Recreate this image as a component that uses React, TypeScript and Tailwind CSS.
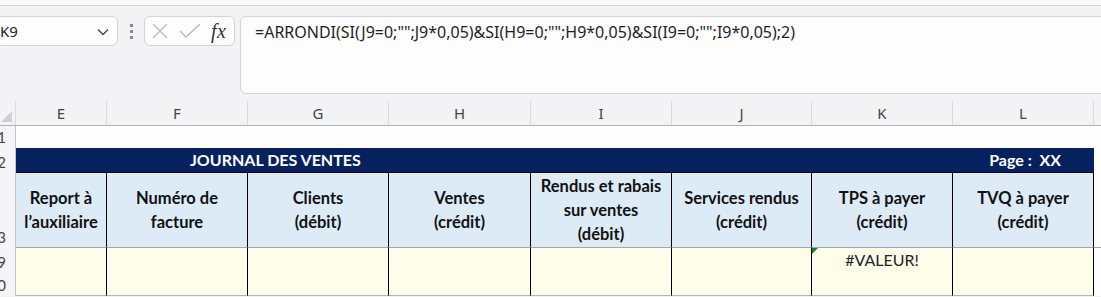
import React from 'react';

const cols = ['E', 'F', 'G', 'H', 'I', 'J', 'K', 'L'];
const grid = 'grid grid-cols-[16px_91px_141px_141px_142px_141px_140px_141px_141px_1fr]';

const headers: string[][] = [
  ['Report à', 'l’auxiliaire'],
  ['Numéro de', 'facture'],
  ['Clients', '(débit)'],
  ['Ventes', '(crédit)'],
  ['Rendus et rabais', 'sur ventes', '(débit)'],
  ['Services rendus', '(crédit)'],
  ['TPS à payer', '(crédit)'],
  ['TVQ à payer', '(crédit)'],
];

// row header is scrolled off to the left, only its right edge shows
function RowNum({ n, className = '' }: { n: string; className?: string }) {
  return (
    <div className={`overflow-hidden bg-[#f5f4f7] border-r border-[#c6c6c6] flex items-end justify-end pr-[9px] text-[15px] leading-[22px] text-[#444] ${className}`}>
      <span className="whitespace-nowrap">{n}</span>
    </div>
  );
}

export default function App() {
  return (
    <div className="w-[1101px] h-[297px] overflow-hidden bg-[#f3f2f5] font-['Noto_Sans',sans-serif]">
      {/* ribbon edge */}
      <div className="h-[6px] bg-[#fbfbfb] border-b border-[#d6d6d6]" />

      {/* formula bar */}
      <div className="flex items-start gap-[5px] pt-[10px] h-[95px]">
        <div className="-ml-[4px] w-[122px] h-[30px] flex items-center justify-between pl-[3px] pr-[8px] bg-[#fdfdfd] border border-[#d3d3d3] rounded-[6px]">
          <span className="text-[15px] text-[#222]">K9</span>
          <svg width="12" height="8" viewBox="0 0 12 8" className="mt-[1px]">
            <path d="M1 1.5 L6 6.5 L11 1.5" fill="none" stroke="#444" strokeWidth="1.3" />
          </svg>
        </div>
        <div className="w-[16px] h-[30px] flex flex-col items-center justify-center gap-[3px]">
          <span className="w-[3px] h-[3px] bg-[#8a8a8a]" />
          <span className="w-[3px] h-[3px] bg-[#8a8a8a]" />
          <span className="w-[3px] h-[3px] bg-[#8a8a8a]" />
        </div>
        <div className="w-[91px] h-[30px] flex items-center pl-[6px] bg-[#fdfdfd] border border-[#d3d3d3] rounded-[6px]">
          <svg width="18" height="18" viewBox="0 0 18 18">
            <path d="M2 2 L16 16 M16 2 L2 16" stroke="#b9b9b9" strokeWidth="1.3" />
          </svg>
          <svg width="22" height="16" viewBox="0 0 22 16" className="ml-[10px]">
            <path d="M1 8 L7 14 L21 1" fill="none" stroke="#b9b9b9" strokeWidth="1.3" />
          </svg>
          <span className="ml-[10px] font-['Liberation_Serif',serif] italic text-[20px] leading-none text-[#333] tracking-[0.5px]">fx</span>
        </div>
        <div className="flex-1 h-[78px] -mr-[10px] bg-[#fdfdfd] border border-[#d3d3d3] rounded-[6px] pl-[14px] pt-[3px] text-[16px] text-[#1f1f1f]">
          =ARRONDI(SI(J9=0;"";J9*0,05)&amp;SI(H9=0;"";H9*0,05)&amp;SI(I9=0;"";I9*0,05);2)
        </div>
      </div>

      {/* sheet */}
      <div className="font-['Lato',sans-serif]">
        {/* column letters */}
        <div className={`${grid} h-[25px] border-b border-[#b3b3b3]`}>
          <div className="relative border-r border-[#dadada]">
            <div className="absolute right-[3px] bottom-[3px] w-0 h-0 border-l-[11px] border-l-transparent border-b-[11px] border-b-[#d0d0d0]" />
          </div>
          {cols.map((c) => (
            <div key={c} className="flex items-center justify-center border-r border-[#dadada] text-[15px] text-[#444] font-['Noto_Sans',sans-serif]">
              {c}
            </div>
          ))}
          <div />
        </div>

        {/* row 1 */}
        <div className={`${grid} h-[22px]`}>
          <RowNum n="1" className="text-[#2fb2e6]" />
          <div className="col-span-9 bg-[#fdfefd]" />
        </div>

        {/* row 2 */}
        <div className={`${grid} h-[25px]`}>
          <RowNum n="2" />
          <div className="col-span-8 bg-[#05215f] flex items-center text-white font-bold text-[16px] border-b border-black">
            <span className="ml-[174px]">JOURNAL DES VENTES</span>
            <span className="ml-auto mr-[33px] whitespace-pre">Page :  XX</span>
          </div>
          <div className="bg-[#fdfefd]" />
        </div>

        {/* row 3 headers */}
        <div className={`${grid} h-[75px]`}>
          <RowNum n="3" />
          {headers.map((h, i) => (
            <div key={i} className="flex flex-col items-center justify-center bg-[#ddebf7] border-r border-black text-[16.5px] leading-[24px] font-bold text-[#111] border-b border-b-[#a6a6a6]">
              {h.map((l) => (
                <span key={l} className="whitespace-nowrap">{l}</span>
              ))}
            </div>
          ))}
          <div className="bg-[#fdfefd] border-b border-[#a6a6a6]" />
        </div>

        {/* rows 9, 10 */}
        {['9', '10'].map((r) => (
          <div key={r} className={`${grid} h-[24px]`}>
            <RowNum n={r} />
            {cols.map((c) => (
              <div key={c} className="relative flex items-center justify-center bg-[#fdfde9] border-r border-black border-b border-b-[#b3b3b3] text-[16px] text-[#222]">
                {r === '9' && c === 'K' && (
                  <>
                    <div className="absolute left-0 top-0 w-0 h-0 border-t-[6px] border-t-[#1e7e34] border-r-[6px] border-r-transparent" />
                    <span>#VALEUR!</span>
                  </>
                )}
              </div>
            ))}
            <div className="bg-[#fdfefd]" />
          </div>
        ))}
      </div>
    </div>
  );
}
